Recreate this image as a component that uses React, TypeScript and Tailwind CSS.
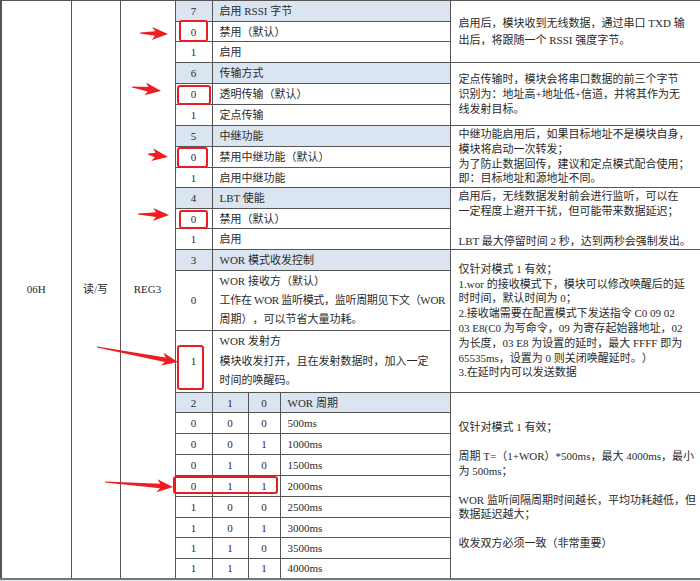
import React from "react";

const line = "border border-[#555]";
const blue = "bg-[#dbe5f1]";
const font = { fontFamily: '"Liberation Serif", "Noto Sans CJK SC", serif' };

type Row = { v: string; d: string; h: number; head?: boolean };

const bitRows: Row[] = [
  { v: "7", d: "启用 RSSI 字节", h: 21, head: true },
  { v: "0", d: "禁用（默认）", h: 20 },
  { v: "1", d: "启用", h: 21 },
  { v: "6", d: "传输方式", h: 21, head: true },
  { v: "0", d: "透明传输（默认）", h: 21 },
  { v: "1", d: "定点传输", h: 21 },
  { v: "5", d: "中继功能", h: 21, head: true },
  { v: "0", d: "禁用中继功能（默认）", h: 21 },
  { v: "1", d: "启用中继功能", h: 20 },
  { v: "4", d: "LBT 使能", h: 21, head: true },
  { v: "0", d: "禁用（默认）", h: 20 },
  { v: "1", d: "启用", h: 21 },
  { v: "3", d: "WOR 模式收发控制", h: 21, head: true },
];

const notes: { at: number; span: number; lines: string[]; lh: string }[] = [
  { at: 0, span: 3, lh: "leading-[17px]", lines: ["启用后，模块收到无线数据，通过串口 TXD 输", "出后，将跟随一个 RSSI 强度字节。"] },
  { at: 3, span: 3, lh: "leading-[15px]", lines: ["定点传输时，模块会将串口数据的前三个字节", "识别为：地址高+地址低+信道，并将其作为无", "线发射目标。"] },
  { at: 6, span: 3, lh: "leading-[14.8px]", lines: ["中继功能启用后，如果目标地址不是模块自身，", "模块将启动一次转发；", "为了防止数据回传，建议和定点模式配合使用；", "即：目标地址和源地址不同。"] },
  { at: 9, span: 3, lh: "leading-[15px]", lines: ["启用后，无线数据发射前会进行监听，可以在", "一定程度上避开干扰，但可能带来数据延迟；", "", "LBT 最大停留时间 2 秒，达到两秒会强制发出。"] },
];

const worNote = [
  "仅针对模式 1 有效；",
  "1.wor 的接收模式下，模块可以修改唤醒后的延",
  "时时间，默认时间为 0；",
  "2.接收端需要在配置模式下发送指令 C0 09 02",
  "03 E8(C0 为写命令，09 为寄存起始器地址，02",
  "为长度，03 E8 为设置的延时，最大 FFFF 即为",
  "65535ms，设置为 0 则关闭唤醒延时。）",
  "3.在延时内可以发送数据",
];

const periodNote = [
  "仅针对模式 1 有效；",
  "",
  "周期 T=（1+WOR）*500ms，最大 4000ms，最小",
  "为 500ms；",
  "",
  "WOR 监听间隔周期时间越长，平均功耗越低，但",
  "数据延迟越大；",
  "",
  "收发双方必须一致（非常重要）",
];

const periods = [
  ["0", "0", "0", "500ms", 21],
  ["0", "0", "1", "1000ms", 21],
  ["0", "1", "0", "1500ms", 21],
  ["0", "1", "1", "2000ms", 21],
  ["1", "0", "0", "2500ms", 21],
  ["1", "0", "1", "3000ms", 20],
  ["1", "1", "0", "3500ms", 21],
  ["1", "1", "1", "4000ms", 20],
] as const;

function Lines({ lines, lh }: { lines: string[]; lh: string }) {
  return (
    <div className={`whitespace-nowrap ${lh}`}>
      {lines.map((l, i) => (
        <div key={i}>{l || "\u00a0"}</div>
      ))}
    </div>
  );
}

// red annotation arrow, thin tail widening into a head
function arrow(x1: number, y1: number, x2: number, y2: number) {
  const dx = x2 - x1;
  const dy = y2 - y1;
  const len = Math.hypot(dx, dy);
  const ux = dx / len;
  const uy = dy / len;
  const nx = -uy;
  const ny = ux;
  const hl = 13;
  const bx = x2 - ux * hl;
  const by = y2 - uy * hl;
  const p = (x: number, y: number) => `${x.toFixed(1)},${y.toFixed(1)}`;
  return [
    p(x1 + nx * 0.5, y1 + ny * 0.5),
    p(bx + nx * 2.3, by + ny * 2.3),
    p(bx - ux * 3 + nx * 6.5, by - uy * 3 + ny * 6.5),
    p(x2, y2),
    p(bx - ux * 3 - nx * 6.5, by - uy * 3 - ny * 6.5),
    p(bx - nx * 2.3, by - ny * 2.3),
    p(x1 - nx * 0.5, y1 - ny * 0.5),
  ].join(" ");
}

const arrows = [
  [140, 33, 168, 34],
  [132, 87, 161, 91],
  [148, 154, 168, 157],
  [138, 214, 169, 215],
  [97, 347, 178, 362],
  [105, 482, 173, 487],
];

const boxes = [
  [180, 21, 27, 20],
  [178, 86, 32, 18],
  [178, 148, 29, 19],
  [180, 211, 27, 17],
  [178, 346, 25, 43],
  [174, 477, 103, 16],
];

export default function App() {
  const last = "border-b-2 border-b-[#777]";
  const cell = `${line} p-0`;
  return (
    <div
      className="relative w-[700px] h-[581px] overflow-hidden bg-white text-[11px] text-[#2a2a2a] [text-spacing-trim:space-all]"
      style={font}
    >
      <table className="w-[700px] table-fixed border-collapse">
        <colgroup>
          <col className="w-[70px]" />
          <col className="w-[49px]" />
          <col className="w-[55px]" />
          <col className="w-[37px]" />
          <col className="w-[36px]" />
          <col className="w-[32px]" />
          <col className="w-[170px]" />
          <col className="w-[251px]" />
        </colgroup>
        <tbody>
          {bitRows.map((r, i) => {
            const note = notes.find((n) => n.at === i);
            return (
              <tr key={i} style={{ height: r.h }}>
                {i === 0 && (
                  <>
                    <td rowSpan={24} className={`${cell} border-l-2 ${last} text-center align-middle`}>06H</td>
                    <td rowSpan={24} className={`${cell} ${last} text-center align-middle`}>读/写</td>
                    <td rowSpan={24} className={`${cell} ${last} text-center align-middle`}>REG3</td>
                  </>
                )}
                <td className={`${cell} text-center leading-[16px] ${r.head ? blue : ""}`}>{r.v}</td>
                <td colSpan={3} className={`${cell} pl-[7px] leading-[16px] whitespace-nowrap ${r.head ? blue : ""}`}>{r.d}</td>
                {note && (
                  <td rowSpan={note.span} className={`${cell} border-r-2 px-[8px] align-middle`}>
                    <Lines lines={note.lines} lh={note.lh} />
                  </td>
                )}
                {i === 12 && (
                  <td rowSpan={3} className={`${cell} border-r-2 px-[8px] align-middle`}>
                    <Lines lines={worNote} lh="leading-[14.8px]" />
                  </td>
                )}
              </tr>
            );
          })}
          <tr style={{ height: 60 }}>
            <td className={`${cell} text-center`}>0</td>
            <td colSpan={3} className={`${cell} pl-[7px] leading-[19px] whitespace-nowrap`}>
              <div>WOR 接收方（默认）</div>
              <div className="tracking-[-0.3px]">工作在 WOR 监听模式，监听周期见下文（WOR</div>
              <div>周期），可以节省大量功耗。</div>
            </td>
          </tr>
          <tr style={{ height: 62 }}>
            <td className={`${cell} text-center`}>1</td>
            <td colSpan={3} className={`${cell} pl-[7px] leading-[19.5px] whitespace-nowrap`}>
              <div>WOR 发射方</div>
              <div>模块收发打开，且在发射数据时，加入一定</div>
              <div>时间的唤醒码。</div>
            </td>
          </tr>
          <tr style={{ height: 20 }}>
            <td className={`${cell} text-center leading-[16px] ${blue}`}>2</td>
            <td className={`${cell} text-center leading-[16px] ${blue}`}>1</td>
            <td className={`${cell} text-center leading-[16px] ${blue}`}>0</td>
            <td className={`${cell} pl-[7px] leading-[16px] ${blue}`}>WOR 周期</td>
            <td rowSpan={9} className={`${cell} border-r-2 ${last} px-[8px] align-middle`}>
              <Lines lines={periodNote} lh="leading-[14.5px]" />
            </td>
          </tr>
          {periods.map((p, i) => {
            const b = i === 7 ? last : "";
            return (
              <tr key={i} style={{ height: p[4] }}>
                <td className={`${cell} text-center leading-[16px] ${b}`}>{p[0]}</td>
                <td className={`${cell} text-center leading-[16px] ${b}`}>{p[1]}</td>
                <td className={`${cell} text-center leading-[16px] ${b}`}>{p[2]}</td>
                <td className={`${cell} pl-[7px] leading-[16px] ${b}`}>{p[3]}</td>
              </tr>
            );
          })}
        </tbody>
      </table>
      <div className="h-[3px] bg-[#e3ebf5]" />

      {/* red annotations */}
      <svg className="pointer-events-none absolute inset-0" width={700} height={581}>
        {boxes.map(([x, y, w, h], i) => (
          <rect key={i} x={x} y={y} width={w} height={h} rx={2} fill="none" stroke="#ec1c24" strokeWidth={2} />
        ))}
        {arrows.map(([a, b, c, d], i) => (
          <polygon key={i} points={arrow(a, b, c, d)} fill="#ee1d23" />
        ))}
      </svg>
    </div>
  );
}
